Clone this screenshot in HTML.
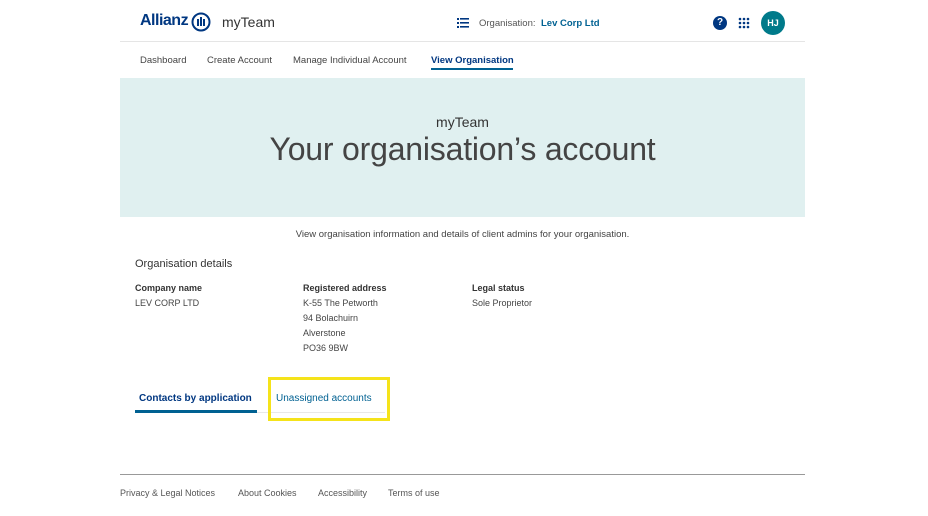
<!DOCTYPE html>
<html><head><meta charset="utf-8"><style>
*{margin:0;padding:0;box-sizing:border-box}
body{width:928px;height:516px;background:#fff;font-family:"Liberation Sans",sans-serif;color:#414141;position:relative;overflow:hidden}
.a{position:absolute;white-space:nowrap}
</style></head><body>
<div class="a" style="left:140px;top:12px;font-size:16px;font-weight:bold;color:#003781;letter-spacing:-0.5px">Allianz</div>
<svg class="a" style="left:191px;top:12px" width="20" height="20" viewBox="0 0 20 20"><circle cx="10" cy="10" r="8.5" fill="none" stroke="#003781" stroke-width="2"/><rect x="6" y="7" width="2" height="7" fill="#003781"/><rect x="9" y="5" width="2" height="9" fill="#003781"/><rect x="12" y="7" width="2" height="7" fill="#003781"/></svg>
<div class="a" style="left:222px;top:14px;font-size:14px;color:#333">myTeam</div>
<svg class="a" style="left:457px;top:18px" width="12" height="10"><g fill="#003781"><rect x="0" y="0" width="2" height="2"/><rect x="3" y="0" width="9" height="1.6"/><rect x="0" y="4" width="2" height="2"/><rect x="3" y="4" width="9" height="1.6"/><rect x="0" y="8" width="2" height="2"/><rect x="3" y="8" width="9" height="1.6"/></g></svg>
<div class="a" style="left:479px;top:18px;font-size:9.5px;color:#555">Organisation:</div>
<div class="a" style="left:541px;top:18px;font-size:9.5px;font-weight:bold;color:#006192">Lev Corp Ltd</div>
<div class="a" style="left:713px;top:16px;width:14px;height:14px;border-radius:50%;background:#003781;color:#fff;font-size:10px;font-weight:bold;text-align:center;line-height:14px">?</div>
<svg class="a" style="left:738px;top:17px" width="12" height="12"><g fill="#003781"><circle cx="2" cy="2" r="1.3"/><circle cx="6" cy="2" r="1.3"/><circle cx="10" cy="2" r="1.3"/><circle cx="2" cy="6" r="1.3"/><circle cx="6" cy="6" r="1.3"/><circle cx="10" cy="6" r="1.3"/><circle cx="2" cy="10" r="1.3"/><circle cx="6" cy="10" r="1.3"/><circle cx="10" cy="10" r="1.3"/></g></svg>
<div class="a" style="left:761px;top:11px;width:24px;height:24px;border-radius:50%;background:#007a8a;color:#fff;font-size:9px;font-weight:bold;text-align:center;line-height:24px">HJ</div>
<div class="a" style="left:120px;top:41px;width:685px;height:1px;background:#e5e5e5"></div>
<div class="a" style="left:140px;top:55px;font-size:9.5px;color:#444">Dashboard</div>
<div class="a" style="left:207px;top:55px;font-size:9.5px;color:#444">Create Account</div>
<div class="a" style="left:293px;top:55px;font-size:9.5px;color:#444">Manage Individual Account</div>
<div class="a" style="left:431px;top:55px;font-size:9.5px;font-weight:bold;color:#003781">View Organisation</div>
<div class="a" style="left:431px;top:68px;width:82px;height:2px;background:#006192"></div>
<div class="a" style="left:120px;top:78px;width:685px;height:139px;background:#e0f0f0"></div>
<div class="a" style="left:120px;top:114px;width:685px;text-align:center;font-size:14px;color:#333">myTeam</div>
<div class="a" style="left:120px;top:131px;width:685px;text-align:center;font-size:32px;color:#444;letter-spacing:-0.2px">Your organisation’s account</div>
<div class="a" style="left:120px;top:229px;width:685px;text-align:center;font-size:9.5px;color:#444">View organisation information and details of client admins for your organisation.</div>
<div class="a" style="left:135px;top:258px;font-size:11px;color:#333">Organisation details</div>
<div class="a" style="left:135px;top:283px;font-size:9px;font-weight:bold;color:#333">Company name</div>
<div class="a" style="left:135px;top:298px;font-size:9px;color:#444">LEV CORP LTD</div>
<div class="a" style="left:303px;top:283px;font-size:9px;font-weight:bold;color:#333">Registered address</div>
<div class="a" style="left:303px;top:296px;font-size:9px;color:#444;line-height:15px;white-space:normal;width:120px">K-55 The Petworth<br>94 Bolachuirn<br>Alverstone<br>PO36 9BW</div>
<div class="a" style="left:472px;top:283px;font-size:9px;font-weight:bold;color:#333">Legal status</div>
<div class="a" style="left:472px;top:298px;font-size:9px;color:#444">Sole Proprietor</div>
<div class="a" style="left:135px;top:412px;width:250px;height:1px;background:#e8e8e8"></div>
<div class="a" style="left:139px;top:393px;font-size:10px;font-weight:bold;color:#003781">Contacts by application</div>
<div class="a" style="left:135px;top:410px;width:122px;height:3px;background:#006192"></div>
<div class="a" style="left:276px;top:393px;font-size:10px;color:#006192">Unassigned accounts</div>
<div class="a" style="left:268px;top:377px;width:122px;height:44px;border:3px solid #f5e31a"></div>
<div class="a" style="left:120px;top:474px;width:685px;height:1px;background:#999"></div>
<div class="a" style="left:120px;top:488px;font-size:9px;color:#555">Privacy &amp; Legal Notices</div>
<div class="a" style="left:238px;top:488px;font-size:9px;color:#555">About Cookies</div>
<div class="a" style="left:318px;top:488px;font-size:9px;color:#555">Accessibility</div>
<div class="a" style="left:388px;top:488px;font-size:9px;color:#555">Terms of use</div>
</body></html>
